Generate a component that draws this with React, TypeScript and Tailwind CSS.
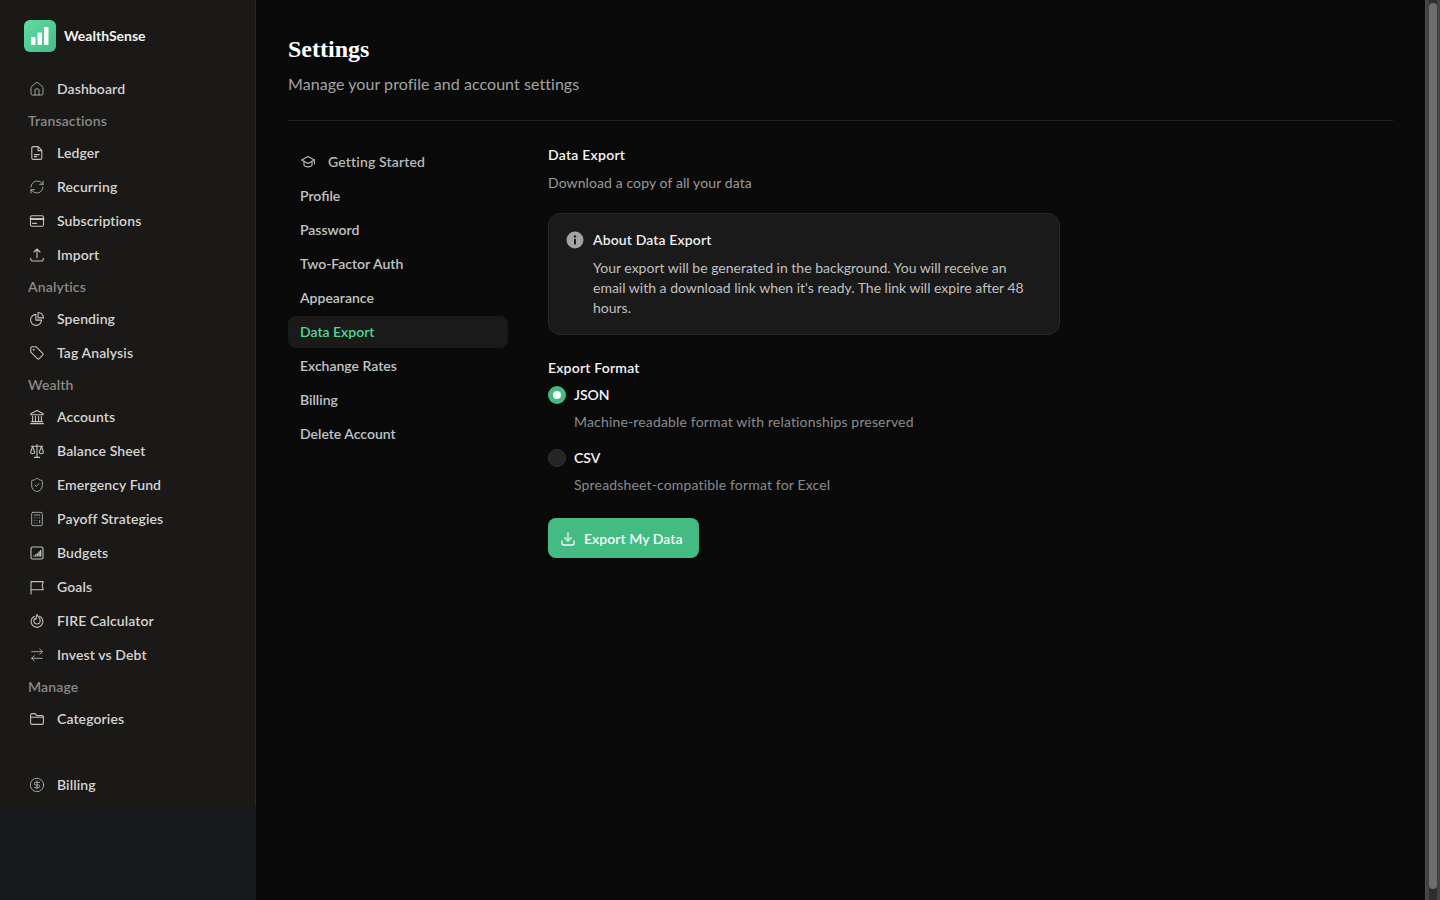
import { House, RefreshCw, ShieldCheck, Calculator, ArrowRightLeft, CircleDollarSign, Download } from 'lucide-react';
import type { ReactNode } from 'react';

const FONT = "font-['Lato','Liberation_Sans',sans-serif]";

function Glyph({ children }: { children: ReactNode }) {
  return (
    <svg width="16" height="16" viewBox="0 0 16 16" fill="none" stroke="currentColor" strokeWidth="1.1" strokeLinecap="round" strokeLinejoin="round" className="shrink-0">
      {children}
    </svg>
  );
}

const LucideIcon = (Icon: typeof House) => () => <Icon size={16} strokeWidth={1.2} className="shrink-0" />;

const HomeIcon = LucideIcon(House);
const RecurringIcon = LucideIcon(RefreshCw);
const ShieldIcon = LucideIcon(ShieldCheck);
const CalcIcon = LucideIcon(Calculator);
const SwapIcon = LucideIcon(ArrowRightLeft);
const DollarIcon = LucideIcon(CircleDollarSign);

const LedgerIcon = () => (
  <Glyph>
    <path d="M4.2 1.6h5l3.6 3.8v7.6a1.4 1.4 0 0 1-1.4 1.4H4.2A1.4 1.4 0 0 1 2.8 13V3a1.4 1.4 0 0 1 1.4-1.4z" />
    <path d="M9 1.8v3.8h3.6M5.4 9.6h5M5.4 11.6h2.4" />
  </Glyph>
);
const CardIcon = () => (
  <Glyph>
    <rect x="1.5" y="2.8" width="13" height="10.4" rx="1.4" />
    <path d="M1.5 6h13" strokeWidth="1.8" />
    <path d="M3.6 10.4h4" />
  </Glyph>
);
const ImportIcon = () => (
  <Glyph>
    <path d="M8 2v8.8M5 5l3-3 3 3M1.8 11.2v1.4c0 .8.6 1.4 1.4 1.4h9.6c.8 0 1.4-.6 1.4-1.4v-1.4" />
  </Glyph>
);
const PieIcon = () => (
  <Glyph>
    <path d="M6.9 3.4a5.5 5.5 0 1 0 5.7 5.7H6.9z" />
    <path d="M9.1 1.5a5.4 5.4 0 0 1 5.4 5.4H9.1z" />
  </Glyph>
);
const TagIcon = () => (
  <Glyph>
    <path d="M1.8 3.1c0-.7.6-1.3 1.3-1.3h4l6.6 6.6c.5.5.5 1.3 0 1.8l-3.5 3.5c-.5.5-1.3.5-1.8 0L1.8 7.1z" />
    <circle cx="4.7" cy="4.7" r=".4" />
  </Glyph>
);
const BankIcon = () => (
  <Glyph>
    <path d="M8 1.4l6.2 3.4v1H1.8v-1zM3.6 7.4v5M6.4 7.4v5M9.6 7.4v5M12.4 7.4v5M2.6 12.6h10.8M1.6 14.6h12.8" />
  </Glyph>
);
const ScaleIcon = () => (
  <Glyph>
    <path d="M8 1.6v12.6M5.4 14.4h5.2M2.4 3.2h11.2" />
    <path d="M3.6 3.4L1.6 9c0 1.1.9 1.8 2 1.8s2-.7 2-1.8zM12.4 3.4l-2 5.6c0 1.1.9 1.8 2 1.8s2-.7 2-1.8z" />
  </Glyph>
);
const BudgetIcon = () => (
  <Glyph>
    <rect x="2" y="2" width="12" height="12" rx="1.6" />
    <path d="M4.6 11.6v-.8M6.4 11.6V9.6M8.2 11.6V8.2M10 11.6V6.6M11.6 11.6V5" strokeWidth="1.4" strokeLinecap="butt" />
  </Glyph>
);
const FlagIcon = () => (
  <Glyph>
    <path d="M2 15V2.6h12.2l-1 4 1 4.2H2" />
  </Glyph>
);
const FireIcon = () => (
  <Glyph>
    <path d="M5.4 3.2a5.9 5.9 0 1 0 5.2 0" />
    <path d="M8 1.4c.2 1.6 3.2 3.4 3.2 6.4a3.2 3.2 0 0 1-6.4 0c0-1 .4-1.8 1.1-2.4.2.7.6 1 1 1C7.4 4.600 7.400 2.800 8 1.400z" />
  </Glyph>
);
const FolderIcon = () => (
  <Glyph>
    <path d="M1.6 4c0-.8.6-1.4 1.4-1.4h3.2l1.4 2h5.4c.8 0 1.4.6 1.4 1.4v6c0 .8-.6 1.4-1.4 1.4H3c-.8 0-1.4-.6-1.4-1.4z" />
    <path d="M1.6 6.2h12.8" />
  </Glyph>
);
const CapIcon = () => (
  <Glyph>
    <path d="M1.6 6L8 2.6 14.4 6 8 9.4z" />
    <path d="M4 7.4v4c1.6 2 6.4 2 8 0v-4M14.4 6v4" />
  </Glyph>
);

const NAV = [
  { label: 'Dashboard', icon: HomeIcon },
  { header: 'Transactions' },
  { label: 'Ledger', icon: LedgerIcon },
  { label: 'Recurring', icon: RecurringIcon },
  { label: 'Subscriptions', icon: CardIcon },
  { label: 'Import', icon: ImportIcon },
  { header: 'Analytics' },
  { label: 'Spending', icon: PieIcon },
  { label: 'Tag Analysis', icon: TagIcon },
  { header: 'Wealth' },
  { label: 'Accounts', icon: BankIcon },
  { label: 'Balance Sheet', icon: ScaleIcon },
  { label: 'Emergency Fund', icon: ShieldIcon },
  { label: 'Payoff Strategies', icon: CalcIcon },
  { label: 'Budgets', icon: BudgetIcon },
  { label: 'Goals', icon: FlagIcon },
  { label: 'FIRE Calculator', icon: FireIcon },
  { label: 'Invest vs Debt', icon: SwapIcon },
  { header: 'Manage' },
  { label: 'Categories', icon: FolderIcon },
];

const SETTINGS_TABS = ['Profile', 'Password', 'Two-Factor Auth', 'Appearance', 'Data Export', 'Exchange Rates', 'Billing', 'Delete Account'];

function NavItem({ label, icon: Icon }: { label: string; icon: () => ReactNode }) {
  return (
    <a className="flex h-8 items-center gap-3 px-[29px] text-sm font-semibold tracking-[0.1px] text-[#d6d5d3]">
      <span className="text-[#c2c1bf]">
        <Icon />
      </span>
      <span>{label}</span>
    </a>
  );
}

function Sidebar() {
  return (
    <aside className="flex w-64 shrink-0 flex-col bg-[#18191c]">
      <div className="flex h-[805px] flex-col border-r border-[#2b2a28] bg-[#1a1917]">
        <div className="flex h-[73px] items-start gap-2 px-6 pt-5">
          <div className="flex h-8 w-8 items-center justify-center rounded-md bg-[linear-gradient(135deg,#5fdca4,#42bd85)]">
            <svg width="20" height="20" viewBox="0 0 20 20" fill="#fff">
              <rect x="1" y="11" width="4.5" height="8" rx="0.8" />
              <rect x="7.5" y="6.5" width="4.5" height="12.5" rx="0.8" />
              <rect x="14" y="1" width="4.5" height="18" rx="0.8" />
            </svg>
          </div>
          <span className="mt-[6px] text-sm font-bold text-[#f2f2f0]">WealthSense</span>
        </div>
        <nav className="flex flex-col gap-[2px]">
          {NAV.map(item =>
            item.header ? (
              <div key={item.header} className="flex h-7 items-center px-7 text-sm font-semibold tracking-[0.15px] text-[#8b8a87]">
                {item.header}
              </div>
            ) : (
              <NavItem key={item.label} label={item.label!} icon={item.icon!} />
            ),
          )}
        </nav>
        <div className="mt-[34px]">
          <NavItem label="Billing" icon={DollarIcon} />
        </div>
      </div>
    </aside>
  );
}

function SettingsNav() {
  return (
    <nav className="flex w-[220px] shrink-0 flex-col gap-[2px] pt-[1px]">
      <a className="flex h-8 items-center gap-3 px-3 text-sm font-semibold tracking-[0.15px] text-[#b9b9b9]">
        <span className="text-[#bdbdbd]">
          <CapIcon />
        </span>
        Getting Started
      </a>
      {SETTINGS_TABS.map(t => (
        <a
          key={t}
          className={
            t === 'Data Export'
              ? 'flex h-8 items-center rounded-lg bg-[#1a1a1a] px-3 text-sm font-semibold text-[#4fd69c]'
              : 'flex h-8 items-center px-3 text-sm font-semibold text-[#c4c4c4]'
          }
        >
          {t}
        </a>
      ))}
    </nav>
  );
}

function RadioRow({ label, hint, checked }: { label: string; hint: string; checked?: boolean }) {
  return (
    <div>
      <div className="flex h-[18px] items-center gap-2">
        {checked ? (
          <span className="flex h-[18px] w-[18px] items-center justify-center rounded-full bg-[#45bb84]">
            <span className="h-2 w-2 rounded-full bg-white" />
          </span>
        ) : (
          <span className="h-[18px] w-[18px] rounded-full border border-[#333] bg-[#262626]" />
        )}
        <span className="text-sm font-semibold text-[#f5f5f5]">{label}</span>
      </div>
      <p className="mt-[9px] pl-[26px] text-sm leading-[18px] tracking-[0.16px] text-[#8a8a8a]">{hint}</p>
    </div>
  );
}

function DataExport() {
  return (
    <section className="ml-10 w-[512px]">
      <h2 className="text-sm font-semibold leading-5 tracking-[0.25px] text-[#f5f5f5]">Data Export</h2>
      <p className="mt-2 text-sm leading-5 tracking-[0.1px] text-[#9a9a9a]">Download a copy of all your data</p>

      <div className="mt-5 flex h-[122px] gap-[9px] rounded-xl border border-[#272727] bg-[#1a1a1a] px-[17px] pt-4">
        <svg width="18" height="18" viewBox="0 0 18 18" className="mt-[1px] shrink-0">
          <circle cx="9" cy="9" r="8.5" fill="#a3a3a3" />
          <circle cx="9" cy="5.4" r="1.2" fill="#1a1a1a" />
          <rect x="8" y="7.8" width="2" height="5.6" rx="0.6" fill="#1a1a1a" />
        </svg>
        <div>
          <h3 className="text-sm font-semibold leading-5 tracking-[0.12px] text-[#ededed]">About Data Export</h3>
          <p className="mt-2 text-sm leading-5 text-[#c0c0c0]">
            Your export will be generated in the background. You will receive an email with a download link when it's ready. The link will expire after 48 hours.
          </p>
        </div>
      </div>

      <h3 className="mt-[23px] text-sm font-semibold leading-5 tracking-[0.2px] text-[#f5f5f5]">Export Format</h3>
      <div className="mt-[8px] flex flex-col gap-[18px]">
        <RadioRow checked label="JSON" hint="Machine-readable format with relationships preserved" />
        <RadioRow label="CSV" hint="Spreadsheet-compatible format for Excel" />
      </div>

      <button className="mt-6 flex h-10 w-[151px] items-center gap-2 rounded-lg bg-[#45bb84] pl-3 pt-[1px] text-sm font-semibold tracking-[0.05px] text-[#f4fbf7]">
        <Download size={16} strokeWidth={1.9} />
        Export My Data
      </button>
    </section>
  );
}

export default function App() {
  return (
    <div className={`flex h-screen overflow-hidden bg-[#0a0a0a] ${FONT}`}>
      <Sidebar />
      <main className="min-w-0 flex-1 px-8 pt-8">
        <header className="h-[89px] border-b border-[#232323]">
          <h1 className="font-['Liberation_Serif',serif] text-2xl font-bold leading-[34px] text-white">Settings</h1>
          <p className="mt-[6px] text-base leading-6 tracking-[0.06px] text-[#a3a3a3]">Manage your profile and account settings</p>
        </header>
        <div className="flex pt-6">
          <SettingsNav />
          <DataExport />
        </div>
      </main>
      {/* page scrollbar */}
      <div className="flex w-[15px] shrink-0 border-l border-[#4e4e4e] bg-[#434343] pl-[3px] pr-[3px]">
        <div className="flex w-2 flex-col bg-[#2e2e2e] pb-[11px] pt-[3px]">
          <div className="flex-1 rounded-full bg-[#6e6e6e]" />
        </div>
      </div>
    </div>
  );
}
